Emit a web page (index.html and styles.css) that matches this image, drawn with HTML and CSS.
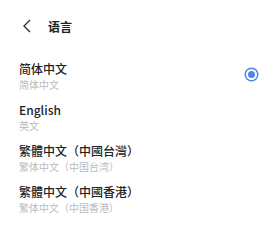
FILE: index.html
```html
<!DOCTYPE html>
<html lang="zh-CN">
<head>
    <meta charset="UTF-8">
    <meta name="viewport" content="width=device-width, initial-scale=1.0">
    <title>语言</title>
    <link rel="stylesheet" href="styles.css">
</head>
<body>
    <div class="header">
        <svg class="back" width="10" height="14" viewBox="0 0 10 14">
            <path d="M8 1 L2 7 L8 13" fill="none" stroke="#333" stroke-width="1.4"/>
        </svg>
        <span class="title">语言</span>
    </div>

    <div class="list">
        <div class="item">
            <div class="text">
                <div class="name">简体中文</div>
                <div class="sub">简体中文</div>
            </div>
            <span class="radio"></span>
        </div>
        <div class="item">
            <div class="text">
                <div class="name">English</div>
                <div class="sub">英文</div>
            </div>
        </div>
        <div class="item">
            <div class="text">
                <div class="name">繁體中文（中國台灣）</div>
                <div class="sub">繁体中文（中国台湾）</div>
            </div>
        </div>
        <div class="item">
            <div class="text">
                <div class="name">繁體中文（中國香港）</div>
                <div class="sub">繁体中文（中国香港）</div>
            </div>
        </div>
    </div>
</body>
</html>
```

FILE: styles.css
```css
body {
    margin: 0;
    background: #fff;
    font-family: "Noto Sans CJK SC", "Noto Sans", sans-serif;
    color: #222;
}
.header {
    display: flex;
    align-items: center;
    height: 22px;
    padding: 15px 0 0 22px;
}
.back {
    display: block;
}
.title {
    margin-left: 16px;
    font-size: 12px;
    font-weight: bold;
}
.list {
    padding: 19px 18px 0 19px;
}
.item {
    display: flex;
    align-items: center;
    justify-content: space-between;
    height: 41px;
}
.name {
    font-size: 12px;
    line-height: 16px;
    font-weight: 500;
}
.sub {
    font-size: 10px;
    line-height: 14px;
    margin-top: 1px;
    color: #bbb;
}
.radio {
    width: 7px;
    height: 7px;
    border-radius: 50%;
    background: #4f86ee;
    border: 2px solid #fff;
    box-shadow: 0 0 0 1.5px #4f86ee;
    margin-right: 3px;
    margin-top: -4px;
}
```
